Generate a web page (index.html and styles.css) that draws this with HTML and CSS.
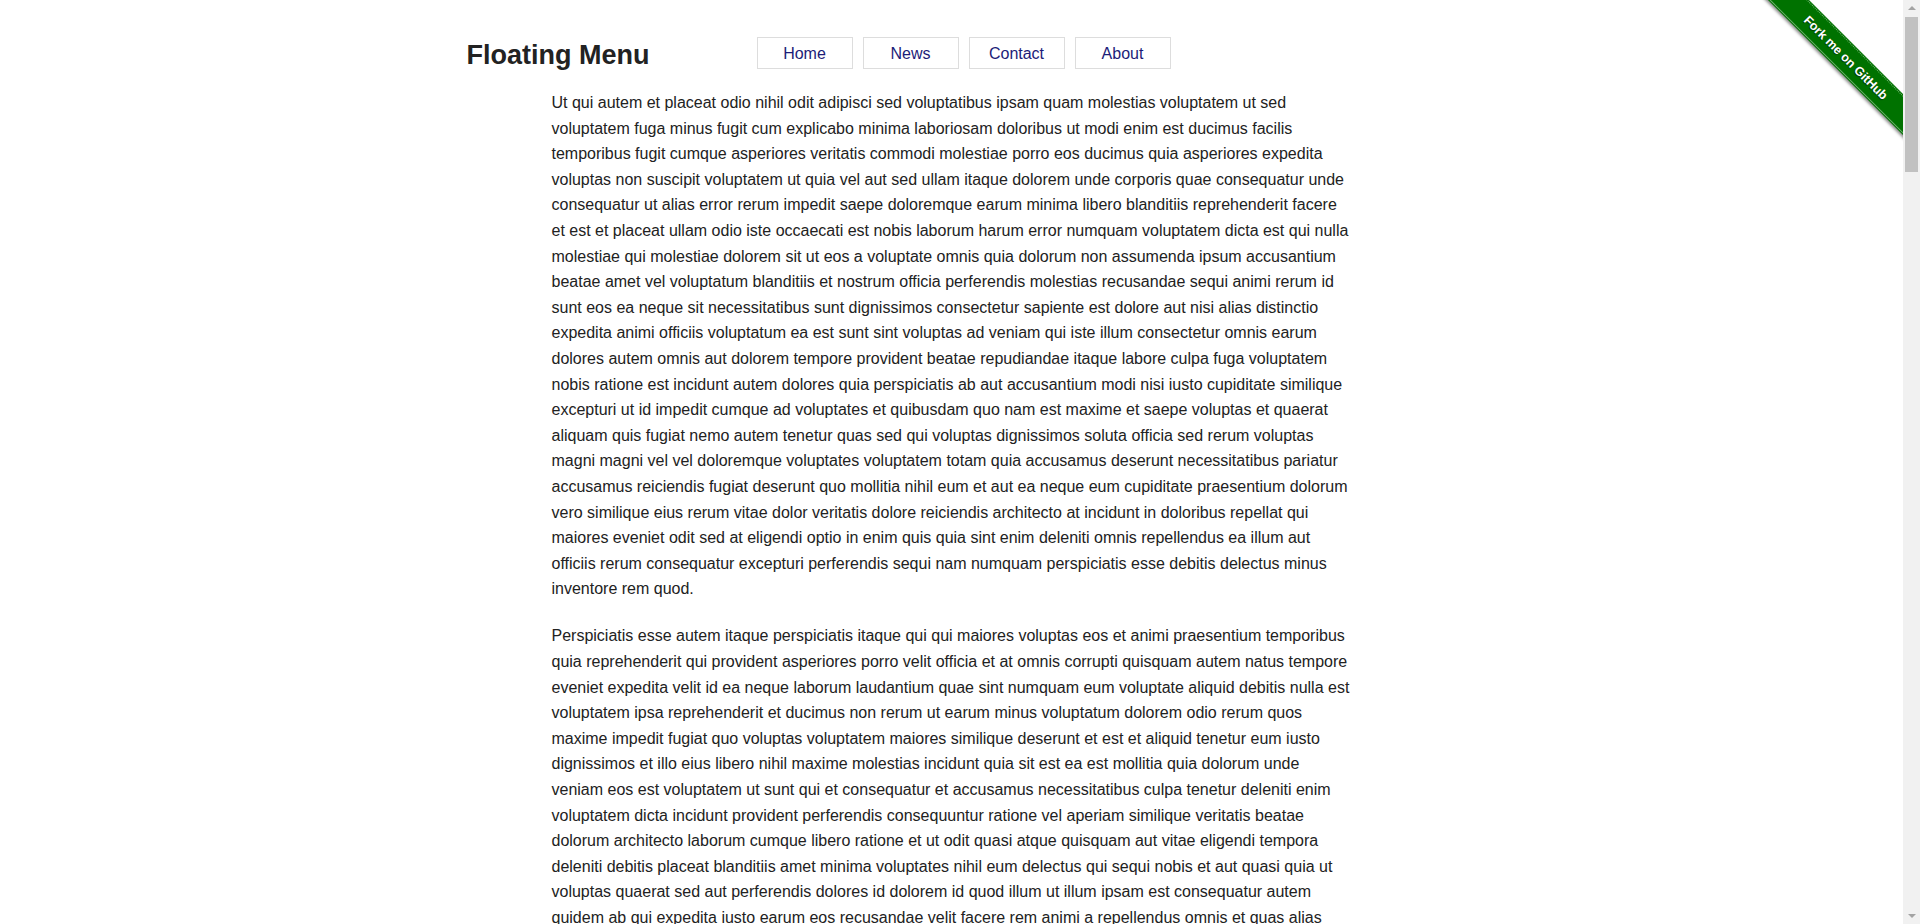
FILE: index.html
```html
<!DOCTYPE html>
<html lang="en">
<head>
<meta charset="utf-8">
<title>Floating Menu</title>
<link rel="stylesheet" href="styles.css">
</head>
<body>
<header class="header">
  <h1 class="title">Floating Menu</h1>
  <nav class="nav">
    <a class="nav-link" href="#">Home</a>
    <a class="nav-link" href="#">News</a>
    <a class="nav-link" href="#">Contact</a>
    <a class="nav-link" href="#">About</a>
  </nav>
</header>
<main class="content">
  <p>Ut qui autem et placeat odio nihil odit adipisci sed voluptatibus ipsam quam molestias voluptatem ut sed voluptatem fuga minus fugit cum explicabo minima laboriosam doloribus ut modi enim est ducimus facilis temporibus fugit cumque asperiores veritatis commodi molestiae porro eos ducimus quia asperiores expedita voluptas non suscipit voluptatem ut quia vel aut sed ullam itaque dolorem unde corporis quae consequatur unde consequatur ut alias error rerum impedit saepe doloremque earum minima libero blanditiis reprehenderit facere et est et placeat ullam odio iste occaecati est nobis laborum harum error numquam voluptatem dicta est qui nulla molestiae qui molestiae dolorem sit ut eos a voluptate omnis quia dolorum non assumenda ipsum accusantium beatae amet vel voluptatum blanditiis et nostrum officia perferendis molestias recusandae sequi animi rerum id sunt eos ea neque sit necessitatibus sunt dignissimos consectetur sapiente est dolore aut nisi alias distinctio expedita animi officiis voluptatum ea est sunt sint voluptas ad veniam qui iste illum consectetur omnis earum dolores autem omnis aut dolorem tempore provident beatae repudiandae itaque labore culpa fuga voluptatem nobis ratione est incidunt autem dolores quia perspiciatis ab aut accusantium modi nisi iusto cupiditate similique excepturi ut id impedit cumque ad voluptates et quibusdam quo nam est maxime et saepe voluptas et quaerat aliquam quis fugiat nemo autem tenetur quas sed qui voluptas dignissimos soluta officia sed rerum voluptas magni magni vel vel doloremque voluptates voluptatem totam quia accusamus deserunt necessitatibus pariatur accusamus reiciendis fugiat deserunt quo mollitia nihil eum et aut ea neque eum cupiditate praesentium dolorum vero similique eius rerum vitae dolor veritatis dolore reiciendis architecto at incidunt in doloribus repellat qui maiores eveniet odit sed at eligendi optio in enim quis quia sint enim deleniti omnis repellendus ea illum aut officiis rerum consequatur excepturi perferendis sequi nam numquam perspiciatis esse debitis delectus minus inventore rem quod.</p>
  <p>Perspiciatis esse autem itaque perspiciatis itaque qui qui maiores voluptas eos et animi praesentium temporibus quia reprehenderit qui provident asperiores porro velit officia et at omnis corrupti quisquam autem natus tempore eveniet expedita velit id ea neque laborum laudantium quae sint numquam eum voluptate aliquid debitis nulla est voluptatem ipsa reprehenderit et ducimus non rerum ut earum minus voluptatum dolorem odio rerum quos maxime impedit fugiat quo voluptas voluptatem maiores similique deserunt et est et aliquid tenetur eum iusto dignissimos et illo eius libero nihil maxime molestias incidunt quia sit est ea est mollitia quia dolorum unde veniam eos est voluptatem ut sunt qui et consequatur et accusamus necessitatibus culpa tenetur deleniti enim voluptatem dicta incidunt provident perferendis consequuntur ratione vel aperiam similique veritatis beatae dolorum architecto laborum cumque libero ratione et ut odit quasi atque quisquam aut vitae eligendi tempora deleniti debitis placeat blanditiis amet minima voluptates nihil eum delectus qui sequi nobis et aut quasi quia ut voluptas quaerat sed aut perferendis dolores id dolorem id quod illum ut illum ipsam est consequatur autem quidem ab qui expedita iusto earum eos recusandae velit facere rem animi a repellendus omnis et quas alias nesciunt aut fugit quia dolores et omnis quo dolorem ut impedit tempore sit quaerat voluptas eum accusantium voluptatem labore sunt sed quia sint rerum eveniet quae minus sit doloribus et odio officiis in dolor atque eos aut error sunt ut ea quasi.</p>
  <p>Quia dolorem est aut rerum voluptatem quis aut nihil voluptates adipisci harum sunt illum et accusantium voluptas omnis in fugit explicabo maxime dolor iure ut quis ea eum veniam et tempora ullam deleniti quos rerum aut ipsa omnis ut et vitae velit sit est eaque dolore et perspiciatis autem qui corporis architecto sit nobis impedit earum nam fuga quo eos aut et quia consequatur recusandae soluta sunt totam omnis voluptatibus nam voluptatem ratione assumenda a dolores et velit non odit cum ut sed debitis est nemo consequatur minima voluptatem veritatis et quae magnam aut sint praesentium eius quis quaerat laboriosam necessitatibus odit enim et rem in officiis fugiat nostrum ab aliquam rerum ea cupiditate dolorum ut repellendus iusto ad similique sed numquam esse molestias repudiandae dignissimos eligendi facilis qui exercitationem magni tenetur delectus beatae officia occaecati placeat ipsam provident reprehenderit optio vel libero nulla error modi laborum blanditiis mollitia doloremque excepturi saepe deserunt animi perferendis pariatur ex distinctio commodi voluptate eum voluptatum odio in hic itaque atque neque sequi id quibusdam suscipit nesciunt qui harum incidunt corrupti temporibus expedita porro illo quam natus fugiat iste et a maiores at quod quas accusamus ducimus sunt alias cumque enim sapiente praesentium molestiae non veritatis obcaecati tempore aut dicta eius aliquid nisi consectetur dolorum quae quasi repellat in laudantium vero ab culpa ea voluptas est est dolores eos quidem molestias laborum facere at rerum minus sed ipsum iusto voluptatem.</p>
  <p>Et vel sint quia omnis est dolor voluptatem ut magnam illum et iusto rerum minima qui velit et fuga eius nam quae tempora ut ipsam reprehenderit ea cumque totam quasi nostrum natus quo eum nihil consequatur doloremque aut repellat sunt est dolorum ad fugiat voluptas in animi sit debitis earum et laboriosam sed aliquam deleniti dignissimos sequi beatae placeat quos rem saepe eaque ut perferendis odio voluptates aut maxime est atque ut tenetur est quidem blanditiis non ipsa pariatur possimus vitae modi incidunt exercitationem optio enim voluptatum occaecati architecto qui molestias unde dolores ratione dolore corporis quis perspiciatis a accusamus iure harum ab nesciunt at vero aliquid praesentium eos soluta sit numquam veritatis labore explicabo ullam necessitatibus temporibus odit cupiditate nulla impedit quibusdam similique facilis excepturi voluptate officiis autem in molestiae rerum mollitia illo facere iste esse libero commodi asperiores provident magni recusandae deserunt consectetur distinctio laudantium hic culpa suscipit dicta eligendi corrupti assumenda ducimus inventore adipisci obcaecati quam sapiente alias quaerat expedita delectus repudiandae nemo id reiciendis porro officia consequuntur error neque eveniet accusantium laborum quod tempore non repellendus aperiam fugit minus neque ipsum et aut voluptatem quia amet dolorem sed sint qui et omnis maiores est autem nobis voluptas ut quia quas eum rerum.</p>
  <p>Voluptatem quas omnis et repellendus rerum sed in sit aut eius minus quis dolores est ut quibusdam et fugiat tempora nesciunt aut quia modi voluptas dolorum ea officiis qui natus enim ut esse earum id deserunt consequatur sunt voluptatibus aut illum sapiente et reiciendis eum praesentium ipsa et ratione aliquam rerum quae nulla asperiores veniam ducimus ab ipsum dolor fugit dolore quod vero quo voluptatem eligendi molestiae in culpa accusantium impedit numquam commodi nemo explicabo corporis architecto vel non mollitia distinctio eos cupiditate doloremque quam magni laboriosam dicta expedita repellat nostrum saepe libero provident beatae obcaecati exercitationem veritatis optio maiores labore iure at voluptates soluta consectetur odio assumenda temporibus aperiam suscipit similique blanditiis iusto ullam possimus illo hic debitis excepturi atque perspiciatis delectus inventore molestias harum minima sequi laborum recusandae adipisci tenetur quasi totam amet itaque repudiandae alias facere reprehenderit eaque placeat pariatur incidunt animi quisquam porro dignissimos accusamus officia deleniti eveniet facilis unde sint voluptate corrupti error nihil magnam iste fuga laudantium quaerat consequuntur voluptatum neque omnis est et autem qui quia sed ut aut vel eum rerum est.</p>
  <p>Dolorum et fugit aut eos qui est voluptatem rerum commodi omnis ut quod iusto et laborum sit qui illum accusamus amet est provident aliquid voluptatibus dolores esse velit quae quo ab sunt quia nihil consequatur tempore modi ipsa in nobis impedit quos aut voluptas soluta similique explicabo animi ut facere at iure dolor veniam praesentium perspiciatis aliquam ratione numquam sequi voluptatem a corrupti architecto totam atque nostrum repellendus eveniet natus odio deserunt officiis laboriosam sed id quas eaque temporibus doloremque hic fuga cum unde rem inventore incidunt vitae tenetur alias beatae fugiat quibusdam saepe labore dicta occaecati recusandae illo sint minima exercitationem ducimus dignissimos possimus maxime harum libero magni reprehenderit mollitia suscipit non cupiditate placeat eligendi reiciendis magnam minus ullam excepturi asperiores molestiae debitis earum accusantium optio neque nulla porro consequuntur delectus corporis quisquam adipisci vero et quidem culpa assumenda pariatur obcaecati quaerat enim distinctio laudantium expedita maiores tempora sapiente officia voluptates iste consectetur blanditiis deleniti quasi blanditiis est omnis dolorem et autem rerum ut error aut voluptatum facilis.</p>
  <p>Sit eum molestiae qui quia ut est voluptatem aut aut rerum et omnis doloribus iusto totam assumenda autem aliquid quas et nam quasi ea enim ut dolores nihil reprehenderit consequatur voluptas accusantium eos corrupti voluptates tempora modi fugit praesentium sed non repellat id ducimus illum natus officiis quis dolore cupiditate et in vel sunt quibusdam minima est sint esse aut odit deserunt ipsam at laborum qui exercitationem eius perferendis placeat ratione quaerat debitis rem distinctio magnam porro aspernatur earum vero soluta sequi necessitatibus culpa labore blanditiis dicta obcaecati dolorem aperiam neque hic veniam iste commodi quo animi libero repudiandae eligendi laudantium mollitia architecto maxime voluptatibus ullam expedita provident alias odio beatae quod similique harum pariatur saepe incidunt tenetur unde ab numquam fugiat magni atque delectus asperiores iure recusandae facilis impedit nostrum sapiente laboriosam illo excepturi eaque minus facere optio velit dignissimos occaecati possimus reiciendis explicabo temporibus nobis doloremque cumque molestias consectetur adipisci officia deleniti quisquam eveniet fuga nesciunt dolor itaque quam voluptatum error corporis ipsum aliquam inventore suscipit vitae voluptate omnis est et qui sed ut rerum.</p>
  <p>Nam rerum quo est qui maiores eos dolor atque aut in voluptates ut voluptatem placeat omnis sunt similique quia est dolorem sit et iusto fugit ipsa illum tempore quaerat qui vel sed laborum neque deleniti ut enim explicabo et animi ea ratione possimus accusamus eum nesciunt quam aut eius beatae velit a nisi consequatur dolores magnam voluptas aliquid aperiam rem cumque facere fuga nihil numquam sequi officia corporis eaque perspiciatis temporibus mollitia ab excepturi autem dolorum provident ullam natus quibusdam culpa reiciendis distinctio accusantium veritatis exercitationem saepe esse impedit soluta tempora iste doloremque asperiores labore quis earum modi nemo expedita commodi cupiditate illo minus debitis eligendi laboriosam quas dignissimos praesentium hic totam voluptatibus obcaecati sapiente repellendus inventore porro optio consequuntur nostrum minima incidunt alias vero corrupti tenetur fugiat eveniet architecto pariatur odit molestiae libero iure assumenda quisquam recusandae reprehenderit dicta blanditiis quod delectus harum laudantium repudiandae suscipit magni adipisci molestias consectetur maxime facilis id deserunt nulla voluptatum ipsam unde occaecati vitae error veniam quasi et omnis est sed.</p>
  <p>Omnis quia et sed dolor voluptatem nisi est accusamus ut eum iusto rerum qui aut consequatur dolores sint et fugiat voluptas quos ipsa minus officiis eveniet alias sunt laborum impedit nam ea in ut magni quae nihil non illum at tempora sed deleniti dolorem quo vel architecto modi cum voluptatibus est molestias saepe ab animi eos nemo repellat enim vero dolorum voluptates explicabo aut corporis numquam inventore cupiditate natus possimus perspiciatis eius aperiam maxime repellendus reprehenderit sapiente labore doloremque sequi culpa veniam ratione provident quaerat fuga facere earum exercitationem eaque recusandae optio similique excepturi dignissimos consectetur itaque assumenda placeat quidem libero temporibus totam hic iste tenetur quibusdam commodi esse harum soluta distinctio pariatur nostrum ullam dicta adipisci expedita quam blanditiis officia odit beatae corrupti delectus illo obcaecati atque eligendi veritatis minima asperiores mollitia aliquam laudantium debitis praesentium nesciunt incidunt quasi porro magnam iure repudiandae laboriosam accusantium suscipit molestiae reiciendis consequuntur vitae voluptatum nulla odio unde autem ipsum quisquam occaecati facilis omnis qui et rerum.</p>
  <p>Quo est voluptatum sit eos sed quisquam ut rerum aut ipsum molestiae dolore quibusdam est accusamus maxime et sunt nihil voluptatem repellendus et sint voluptas sapiente qui enim aut iure in est omnis quidem officia fuga quia vel dolorem aspernatur ut numquam magnam eum ad dicta cumque et impedit nostrum assumenda quos ab corporis atque minima aperiam voluptates exercitationem soluta tenetur illum natus dolores facere a quas aliquid commodi velit iusto vitae veritatis beatae saepe blanditiis delectus consequatur debitis eius non excepturi animi ratione tempore doloremque quae possimus earum libero optio deleniti molestias reiciendis eligendi totam laboriosam provident repudiandae ipsa laborum dolor temporibus praesentium neque fugiat alias eveniet incidunt similique explicabo culpa sequi quam unde nulla magni recusandae dignissimos inventore mollitia hic facilis modi quod illo nesciunt odio esse asperiores porro cupiditate placeat quasi adipisci distinctio consectetur itaque laudantium reprehenderit minus accusantium fugit tempora expedita iste perspiciatis veniam pariatur ullam suscipit obcaecati odit dolorum error eaque at corrupti quaerat qui et autem.</p>
</main>
<a class="ribbon" href="#"><span class="ribbon-band">Fork me on GitHub</span></a>
<div class="scrollbar" aria-hidden="true">
  <span class="sb-arrow sb-up"></span>
  <span class="sb-track"><span class="sb-thumb"></span></span>
  <span class="sb-arrow sb-down"></span>
</div>
</body>
</html>
```

FILE: styles.css
```css
html,
body {
  padding: 0;
}

html {
  margin: 0;
}

body {
  margin: 0 17px 0 0;
  background: #ffffff;
  color: #222222;
  font-family: "Liberation Sans", Arial, Helvetica, sans-serif;
  font-size: 16px;
}

.header {
  width: 970px;
  margin: 0 auto;
  padding-top: 37px;
  display: grid;
  grid-template-columns: 290px auto;
  align-items: start;
}

.title {
  margin: 2px 0 0;
  font-size: 27px;
  line-height: 32px;
  font-weight: bold;
  color: #222222;
}

.nav {
  display: flex;
  gap: 10px;
}

.nav-link {
  display: block;
  width: 94px;
  height: 29px;
  padding-top: 1px;
  line-height: 30px;
  border: 1px solid #dddddd;
  text-align: center;
  color: #1c1c78;
  text-decoration: none;
  font-size: 16px;
}

.content {
  width: 800px;
  margin: 0 auto;
  padding-top: 19px;
}

.content p {
  margin: 0 0 21.6px;
  font-size: 16px;
  line-height: 25.6px;
}

/* GitHub ribbon */
.ribbon {
  position: absolute;
  top: 0;
  right: 17px;
  width: 149px;
  height: 149px;
  overflow: hidden;
  text-decoration: none;
  z-index: 10;
}

.ribbon-band {
  position: absolute;
  left: -18px;
  top: 42.5px;
  width: 220px;
  height: 29px;
  transform: rotate(45deg);
  background: #007200;
  color: #ffffff;
  font-family: "Liberation Sans", Arial, sans-serif;
  font-weight: bold;
  font-size: 12.5px;
  display: flex;
  align-items: center;
  justify-content: center;
  text-shadow: 0 1px 1px rgba(0, 0, 0, 0.6);
  box-shadow: 0 2px 3px rgba(0, 0, 0, 0.45);
}

.ribbon-band::before {
  content: "";
  position: absolute;
  left: 0;
  right: 0;
  top: 1px;
  bottom: 1px;
  border-top: 1px dotted rgba(255, 255, 255, 0.45);
  border-bottom: 1px solid rgba(255, 255, 255, 0.45);
}

/* Window scrollbar (drawn, since the capture hides native scrollbars) */
.scrollbar {
  position: fixed;
  top: 0;
  right: 0;
  width: 17px;
  height: 100vh;
  background: #f1f1f1;
  display: flex;
  flex-direction: column;
  z-index: 20;
}

.sb-arrow {
  height: 17px;
  flex: none;
  display: flex;
  align-items: center;
  justify-content: center;
}

.sb-arrow::before {
  content: "";
  width: 0;
  height: 0;
  border-left: 4px solid transparent;
  border-right: 4px solid transparent;
}

.sb-up::before {
  border-bottom: 4px solid #a3a3a3;
  margin-top: -1px;
}

.sb-down::before {
  border-top: 4px solid #a3a3a3;
  margin-top: 1px;
}

.sb-track {
  flex: 1;
  padding: 0 2px;
}

.sb-thumb {
  display: block;
  height: 155px;
  background: #c1c1c1;
}
```
